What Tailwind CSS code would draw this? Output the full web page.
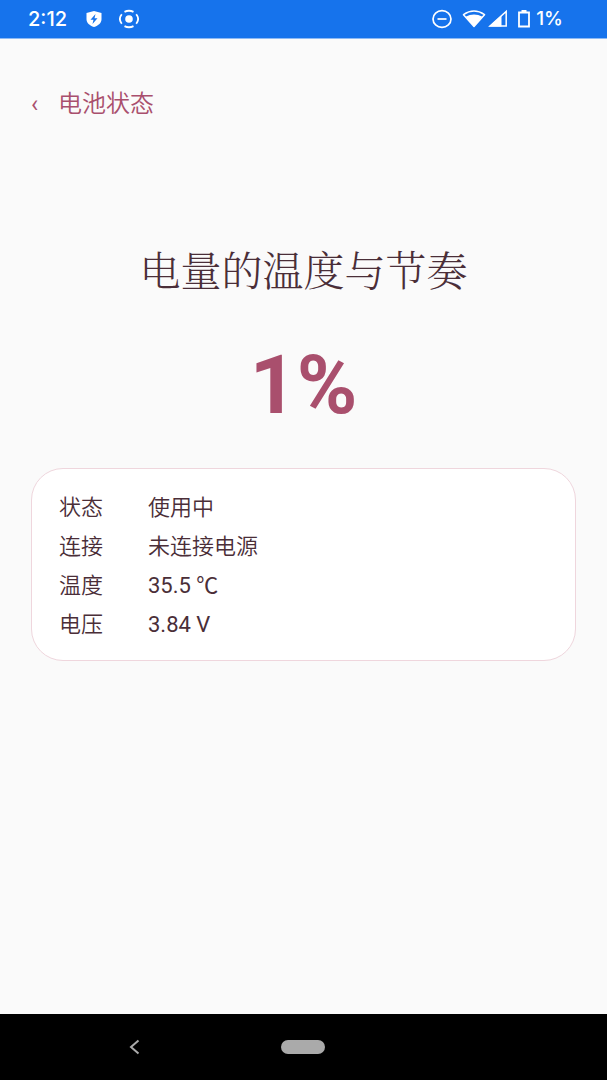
<!DOCTYPE html>
<html lang="zh-CN">
<head>
    <meta charset="UTF-8">
    <meta name="viewport" content="width=device-width, initial-scale=1.0">
    <title>电池状态</title>
    <script src="https://cdn.jsdelivr.net/npm/@tailwindcss/browser@4"></script>
</head>
<body class="min-h-screen flex flex-col bg-[#fafafa] text-[#4a2e38] font-[Roboto,'Noto_Sans_CJK_SC',sans-serif]">
    <!-- 系统状态栏 -->
    <header class="h-[39px] shrink-0 flex items-center justify-between pl-7 pr-11 bg-[#1673ec] border-b border-[#8dbaf5] text-white">
        <div class="flex items-center">
            <span class="w-[57px] text-xl font-medium font-[Inter,sans-serif]">2:12</span>
            <svg class="w-[18px] h-[18px]" viewBox="0 0 18 18">
                <path d="M9 1 16.500 3v6c0 4-3 6.500-7.500 8C4.500 15.500 1.500 13 1.500 9V3z" fill="#fff"/>
                <path d="M10.500 4 5.500 9.700h3L7.500 14l5-5.700h-3z" fill="#1673ec"/>
            </svg>
            <svg class="w-5 h-5 ml-4" viewBox="0 0 20 20" fill="none" stroke="#fff" stroke-width="1.800">
                <circle cx="10" cy="10" r="3.800" fill="#fff" stroke="none"/>
                <path d="M5.500 2.900a9 8 0 0 1 9 0M17.200 5.300a9 8 0 0 1 0 9.400M14.500 17.100a9 8 0 0 1-9 0M2.800 14.700a9 8 0 0 1 0-9.400"/>
            </svg>
        </div>
        <div class="flex items-center">
            <svg class="w-5 h-5 mr-[10px]" viewBox="0 0 20 20" fill="none" stroke="#fff" stroke-width="1.700">
                <ellipse cx="10" cy="10" rx="9" ry="8.300"/>
                <path d="M5.500 10h9"/>
            </svg>
            <svg class="w-6 h-5 mr-[2px]" viewBox="0 0 24 20">
                <path d="M1.500 5.700Q12-1.500 22.500 5.700L12 17.500z" fill="none" stroke="#fff" stroke-width="1.500" stroke-linejoin="round"/>
                <path d="M3.500 7.800Q12 3 20.500 7.800L12 17.500z" fill="#fff"/>
            </svg>
            <svg class="w-5 h-5 mr-[10px]" viewBox="0 0 20 20">
                <path d="M2 17 18.200 2.500V17z" fill="none" stroke="#fff" stroke-width="1.500"/>
                <path d="M1 17.500 13.500 6.500v11z" fill="#fff"/>
            </svg>
            <svg class="w-3 h-5 mr-[6px]" viewBox="0 0 12 20" fill="none" stroke="#fff" stroke-width="1.800">
                <path d="M1 3.500h10v14H1z"/>
                <path d="M3.500 2h5" stroke-width="2"/>
            </svg>
            <span class="text-[19px] font-medium font-[Inter,sans-serif]">1%</span>
        </div>
    </header>

    <main class="grow flex flex-col px-[31px]">
        <!-- 返回与标题 -->
        <div class="mt-12 h-[34px] flex items-center text-2xl text-[#a94f6d]">
            <button type="button" aria-label="返回" class="w-[27px] text-left">‹</button>
            <h1 class="font-[350]">电池状态</h1>
        </div>

        <h2 class="mt-[124px] text-center text-[41px] leading-[48px] font-light font-['Noto_Serif_CJK_SC','Noto_Sans_CJK_SC',serif]">电量的温度与节奏</h2>
        <p class="mt-[46px] text-center text-[82px] leading-[92px] font-bold text-[#a94f6d]">1%</p>

        <!-- 电池详情 -->
        <dl class="mt-[37px] pt-[19px] pb-4 px-[27px] grid grid-cols-[89px_1fr] bg-white border border-[#efd6dd] rounded-[32px] text-[22px] leading-[39px] font-[350]">
            <dt>状态</dt>
            <dd>使用中</dd>
            <dt>连接</dt>
            <dd>未连接电源</dd>
            <dt>温度</dt>
            <dd class="font-normal">35.5 ℃</dd>
            <dt>电压</dt>
            <dd class="font-normal">3.84 V</dd>
        </dl>
    </main>

    <!-- 系统导航栏 -->
    <nav class="h-[66px] shrink-0 grid grid-cols-3 items-center bg-black">
        <button type="button" aria-label="后退" class="justify-self-end mr-[62px]">
            <svg class="w-3 h-4" viewBox="0 0 12 16" fill="none" stroke="#aaa" stroke-width="2">
                <path d="M10.500 1.500 3 8l7.500 6.500"/>
            </svg>
        </button>
        <button type="button" aria-label="主屏幕" class="justify-self-center w-11 h-[14px] rounded-full bg-[#aaa]"></button>
    </nav>
</body>
</html>
